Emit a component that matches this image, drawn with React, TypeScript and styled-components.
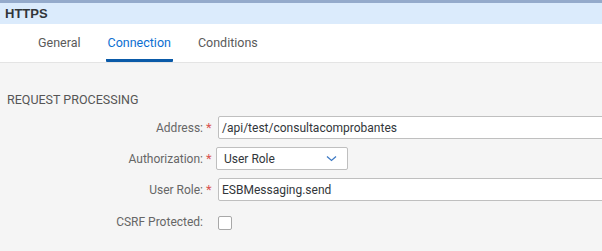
import React from 'react'
import styled, { createGlobalStyle } from 'styled-components'

const GlobalStyle = createGlobalStyle`
  body {
    margin: 0;
    background: #f5f5f5;
    font-family: Roboto, "Liberation Sans", Arial, sans-serif;
    color: #333;
  }
`

const Page = styled.div`
  width: 602px;
  height: 251px;
  overflow: hidden;
  background: #f5f5f5;
`

const TitleBar = styled.div`
  height: 21px;
  border-top: 3px solid #94aacb;
  background: #dbebfc;
  padding-left: 5px;
  display: flex;
  align-items: center;
  font-family: "Liberation Sans", Arial, sans-serif;
  font-size: 13px;
  font-weight: bold;
  color: #32363a;
`

const TabBar = styled.div`
  height: 38px;
  background: #fff;
  border-bottom: 1px solid #e4e4e4;
  display: flex;
  align-items: stretch;
  gap: 23px;
  padding-left: 36px;
`

const Tab = styled.div<{ active?: boolean }>`
  display: flex;
  align-items: center;
  padding: 1px 2px 0;
  font-size: 12.5px;
  color: ${p => (p.active ? '#0a6ed1' : '#5a5a5a')};
  border-bottom: 3px solid ${p => (p.active ? '#0a5aa8' : 'transparent')};
  border-radius: 1px;
`

const Section = styled.div`
  padding: 29px 0 0 7px;
`

const SectionTitle = styled.div`
  font-size: 12.5px;
  color: #555;
  text-transform: uppercase;
  height: 18px;
`

const Form = styled.div`
  display: grid;
  grid-template-columns: 204px 1fr;
  column-gap: 7px;
  row-gap: 8px;
  margin-top: 6px;
`

const Label = styled.div<{ top?: boolean }>`
  display: flex;
  justify-content: flex-end;
  align-items: ${p => (p.top ? 'flex-start' : 'center')};
  padding-top: ${p => (p.top ? '6px' : '0')};
  font-size: 12px;
  color: #666;
  gap: 3px;
`

const Required = styled.span`
  color: #d9534f;
  font-size: 13px;
  width: 5px;
`

const Input = styled.div<{ narrow?: boolean }>`
  height: 21px;
  width: ${p => (p.narrow ? '119px' : '400px')};
  background: #fff;
  border: 1px solid #bfbfbf;
  border-radius: 2px;
  display: flex;
  align-items: center;
  justify-content: space-between;
  padding: ${p => (p.narrow ? '0 10px 0 1px' : '0 10px 0 3px')};
  margin-left: ${p => (p.narrow ? '-2px' : '0')};
  box-sizing: content-box;
  font-size: 12px;
  color: #32363a;
`

const SelectText = styled.span`
  padding-left: 6px;
`

const CheckBox = styled.div`
  width: 12px;
  height: 12px;
  border: 1px solid #a8a8a8;
  border-radius: 2px;
  background: #fff;
  margin-top: 7px;
`

const CheckCell = styled.div`
  height: 28px;
`

const Chevron = () => (
  <svg width="11" height="7" viewBox="0 0 11 7">
    <path d="M1 1.5 L5.5 5.5 L10 1.5" fill="none" stroke="#3e7ac4" strokeWidth="1.3" />
  </svg>
)

const App = () => {
  return (
    <Page>
      <GlobalStyle />
      <TitleBar>HTTPS</TitleBar>
      <TabBar>
        <Tab>General</Tab>
        <Tab active>Connection</Tab>
        <Tab>Conditions</Tab>
      </TabBar>
      <Section>
        <SectionTitle>Request Processing</SectionTitle>
        <Form>
          <Label>Address:<Required>*</Required></Label>
          <Input>/api/test/consultacomprobantes</Input>
          <Label>Authorization:<Required>*</Required></Label>
          <Input narrow>
            <SelectText>User Role</SelectText>
            <Chevron />
          </Input>
          <Label>User Role:<Required>*</Required></Label>
          <Input>ESBMessaging.send</Input>
          <Label top>CSRF Protected:<Required /></Label>
          <CheckCell>
            <CheckBox />
          </CheckCell>
        </Form>
      </Section>
    </Page>
  )
}

export default App
